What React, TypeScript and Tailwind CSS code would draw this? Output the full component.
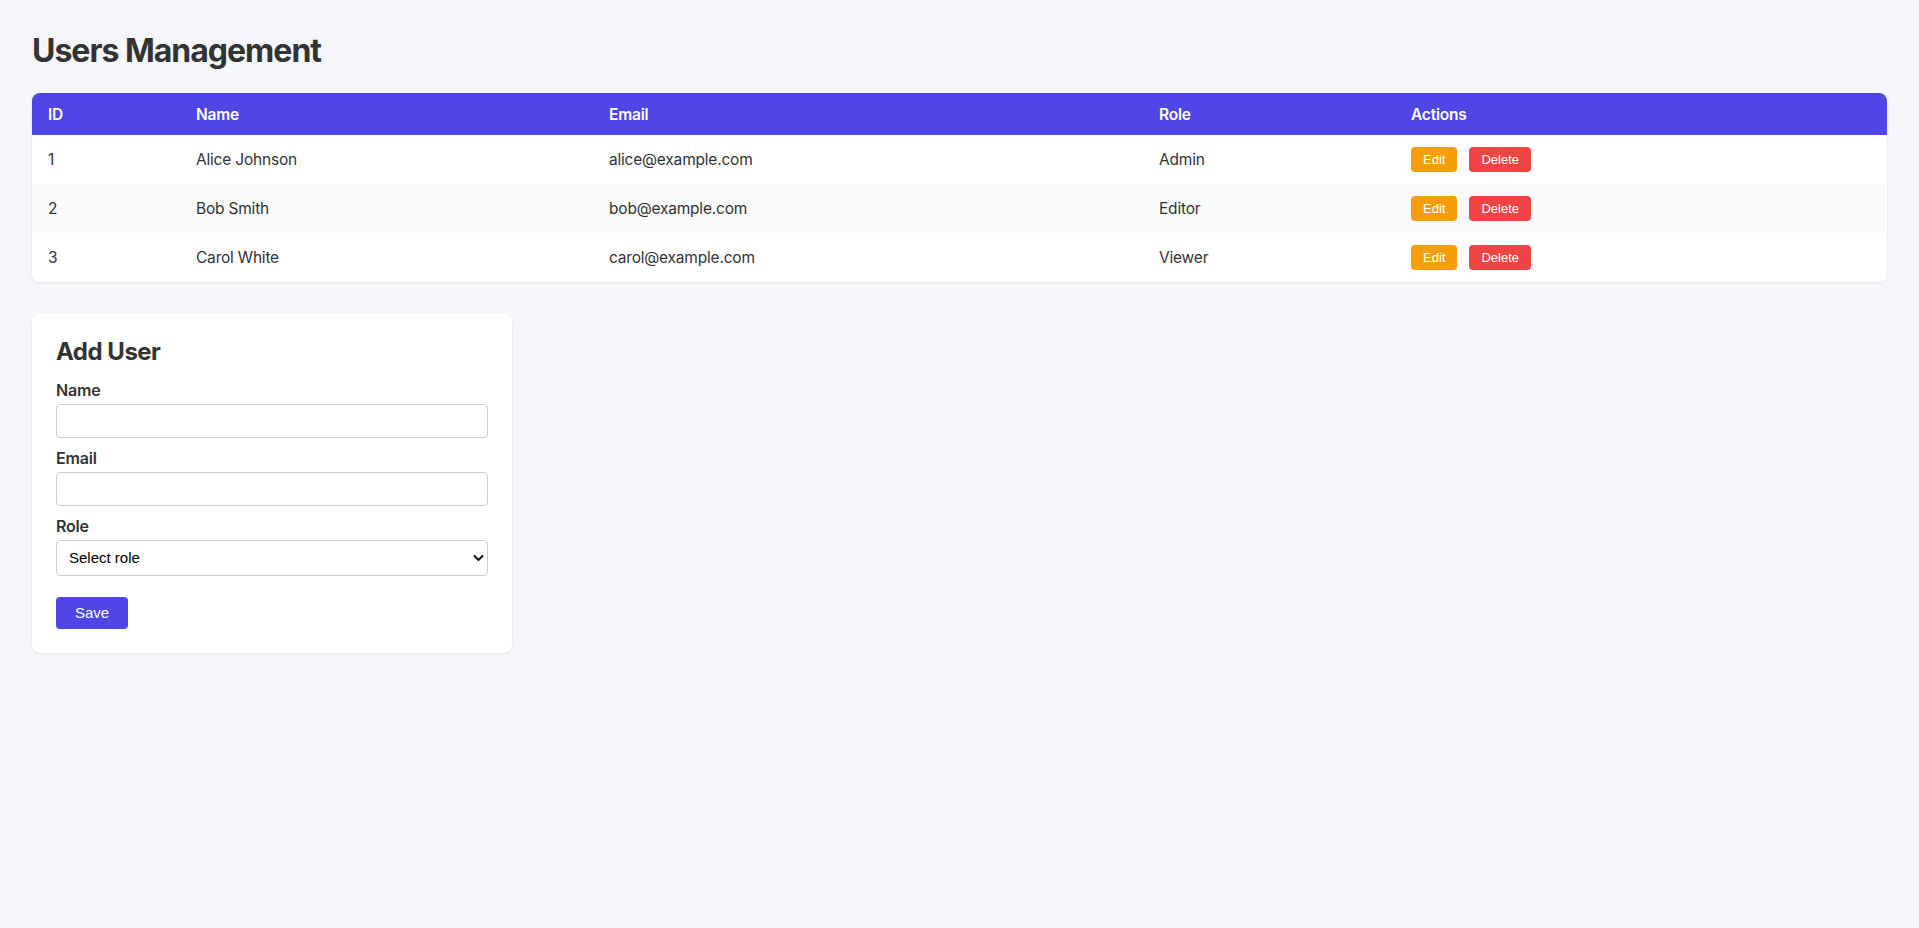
import React, { useState } from 'react';

interface User {
  id: number;
  name: string;
  email: string;
  role: string;
}

const USERS: User[] = [
  { id: 1, name: 'Alice Johnson', email: 'alice@example.com', role: 'Admin' },
  { id: 2, name: 'Bob Smith', email: 'bob@example.com', role: 'Editor' },
  { id: 3, name: 'Carol White', email: 'carol@example.com', role: 'Viewer' },
];

const UsersTable: React.FC<{ users: User[] }> = ({ users }) => (
  <div className="bg-white rounded-lg overflow-hidden shadow-[0_1px_3px_rgba(0,0,0,0.08)]">
    <table className="w-full border-collapse text-left text-[15.5px] tracking-[-0.2px] text-[#333]">
      <thead>
        <tr className="bg-[#4f46e5] text-white">
          <th className="w-[148px] h-[42px] px-4 font-semibold">ID</th>
          <th className="w-[413px] px-4 font-semibold">Name</th>
          <th className="w-[550px] px-4 font-semibold">Email</th>
          <th className="w-[252px] px-4 font-semibold">Role</th>
          <th className="px-4 font-semibold">Actions</th>
        </tr>
      </thead>
      <tbody>
        {users.map((u, i) => (
          <tr key={u.id} className={i % 2 === 1 ? 'bg-[#f9fafb]' : 'bg-white'}>
            <td className="h-[49px] px-4">{u.id}</td>
            <td className="px-4">{u.name}</td>
            <td className="px-4">{u.email}</td>
            <td className="px-4">{u.role}</td>
            <td className="px-4">
              <div className="flex gap-3 font-['Liberation_Sans',Arial,sans-serif] text-[13px] tracking-normal text-white">
                <button className="h-[25px] px-3 rounded bg-[#f59e0b]">Edit</button>
                <button className="h-[25px] px-3 rounded bg-[#ef4444]">Delete</button>
              </div>
            </td>
          </tr>
        ))}
      </tbody>
    </table>
  </div>
);

const AddUserForm: React.FC = () => {
  const [name, setName] = useState('');
  const [email, setEmail] = useState('');
  const [role, setRole] = useState('');

  return (
    <form
      onSubmit={(e) => e.preventDefault()}
      className="w-[480px] bg-white rounded-lg p-6 shadow-[0_1px_3px_rgba(0,0,0,0.08)]"
    >
      <h2 className="text-[24px] leading-[1.2] font-bold tracking-[-0.5px] text-[#333] mb-[11px]">Add User</h2>

      <label className="block text-[16px] leading-6 font-semibold tracking-[-0.2px] text-[#333] mb-[2px]">Name</label>
      <input
        type="text"
        value={name}
        onChange={(e) => setName(e.target.value)}
        className="block w-full h-[34px] px-2 mb-2 border border-[#ccc] rounded bg-white"
      />

      <label className="block text-[16px] leading-6 font-semibold tracking-[-0.2px] text-[#333] mb-[2px]">Email</label>
      <input
        type="email"
        value={email}
        onChange={(e) => setEmail(e.target.value)}
        className="block w-full h-[34px] px-2 mb-2 border border-[#ccc] rounded bg-white"
      />

      <label className="block text-[16px] leading-6 font-semibold tracking-[-0.2px] text-[#333] mb-[2px]">Role</label>
      <div className="relative mb-[21px]">
        <select
          value={role}
          onChange={(e) => setRole(e.target.value)}
          className="block w-full h-[36px] pl-[12px] pr-8 appearance-none border border-[#ccc] rounded bg-white text-black text-[15px] font-['Liberation_Sans',Arial,sans-serif]"
        >
          <option value="">Select role</option>
          <option value="Admin">Admin</option>
          <option value="Editor">Editor</option>
          <option value="Viewer">Viewer</option>
        </select>
        <svg
          className="absolute right-[4px] top-1/2 -translate-y-1/2 pointer-events-none"
          width="11"
          height="7"
          viewBox="0 0 11 7"
          fill="none"
        >
          <path d="M1.5 1.5L5.5 5.5L9.5 1.5" stroke="#111" strokeWidth="2" strokeLinecap="round" strokeLinejoin="round" />
        </svg>
      </div>

      <button
        type="submit"
        className="h-[32px] px-[19px] rounded bg-[#4f46e5] text-white text-[15px] font-['Liberation_Sans',Arial,sans-serif]"
      >
        Save
      </button>
    </form>
  );
};

export default function App() {
  return (
    <div className="min-h-screen bg-[#f5f6fa] p-8 font-['Inter','Noto_Sans',sans-serif]">
      <h1 className="text-[32px] leading-[1.2] font-bold tracking-[-1px] text-[#333] mb-[23px]">Users Management</h1>
      <div className="mb-8">
        <UsersTable users={USERS} />
      </div>
      <AddUserForm />
    </div>
  );
}
